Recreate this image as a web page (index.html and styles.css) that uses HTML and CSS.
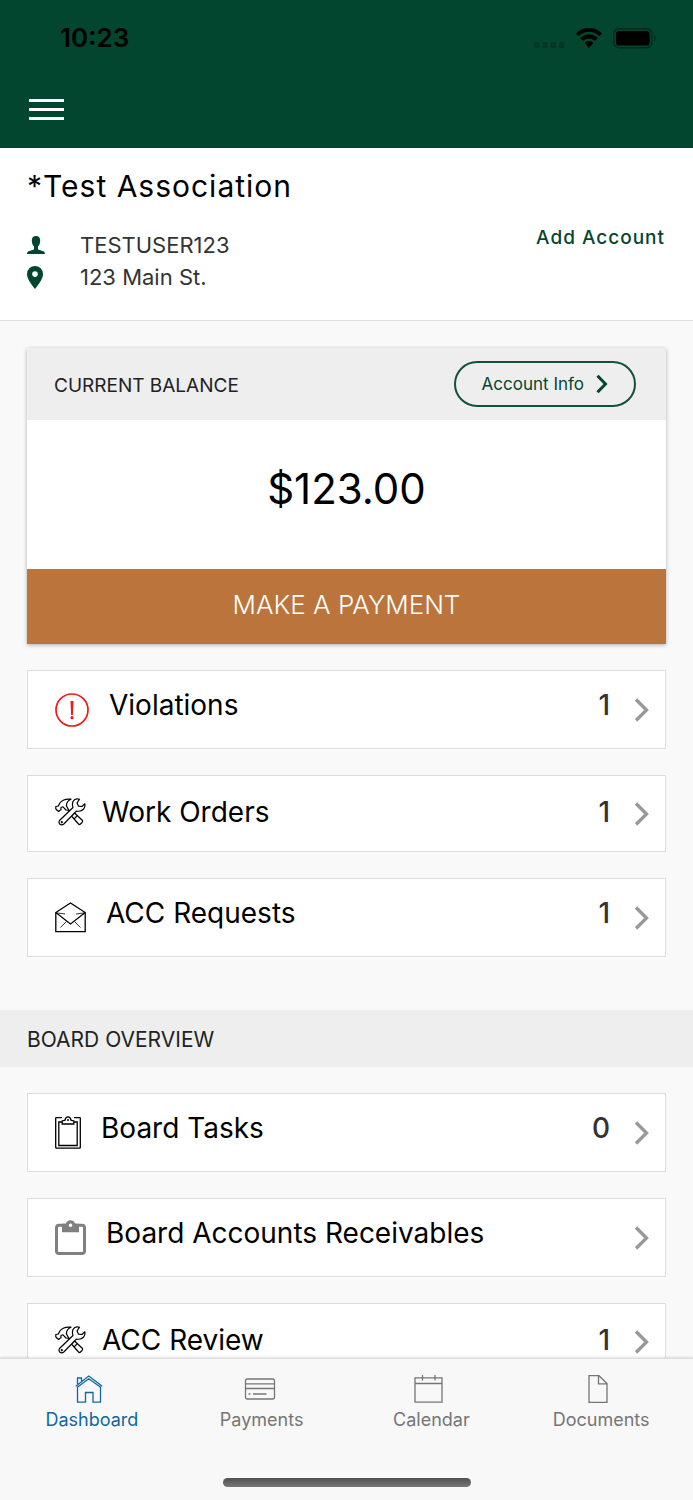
FILE: index.html
```
<!DOCTYPE html>
<html lang="en">
<head>
<meta charset="utf-8">
<meta name="viewport" content="width=device-width, initial-scale=1">
<title>Dashboard</title>
<link rel="stylesheet" href="styles.css">
</head>
<body>
<svg class="symbols" aria-hidden="true">
  <symbol id="chevron" viewBox="0 0 16 24"><path d="M2 1.5 12.500 12 2 22.500" fill="none" stroke="currentColor" stroke-width="3.400"/></symbol>
  <symbol id="tools" viewBox="0 0 31 28">
    <g fill="#fff" stroke="currentColor" stroke-width="1.200" stroke-linejoin="round">
      <path d="M16.500 18 19.500 15 27.500 22.500Q28 23.500 27 24.500L25.500 26Q24.500 27 23.500 26ZM19 21 22 17.800"/>
      <path d="M16 1.200Q8 .2 4.500 5.500L3.500 8 .8 8.500V11L3.500 13.500 6 11.500V9.500L8 8.800 11 12 14 12.500 11.500 8Q11 3.500 16 1.200Z"/>
      <path d="M24.500 1.200Q20-.2 18 3.500 16.800 6.500 18 9.500L4.500 22.500Q3.200 24.500 5 26.300 7 27.500 8.800 26L21.500 13Q26 14 28.700 11 30.500 8.500 29.800 5.800L27 8.500 23.500 8.200 22 5Z"/>
      <circle cx="6.800" cy="24.200" r=".5"/>
    </g>
  </symbol>
</svg>
<div class="app">
  <header class="topbar">
    <div class="status">
      <span class="time">10:23</span>
      <span class="status-icons">
        <svg class="dots" viewBox="0 0 31 6" aria-hidden="true"><g fill="#000" opacity=".22"><rect width="5.500" height="6" rx="1.500"/><rect x="8.300" width="5.500" height="6" rx="1.500"/><rect x="16.600" width="5.500" height="6" rx="1.500"/><rect x="25" width="5.500" height="6" rx="1.500"/></g></svg>
        <svg class="wifi" viewBox="0 0 26 20" aria-hidden="true"><path d="M13 0C18 0 22.500 1.900 25.700 5.200Q26 5.600 25.600 6L23.800 7.800Q23.400 8.100 23 7.800A14.500 14.500 0 0 0 3 7.800Q2.600 8.100 2.200 7.800L.4 6Q0 5.600.3 5.200C3.500 1.900 8 0 13 0ZM13 6.500C16.200 6.500 19.200 7.700 21.400 9.800Q21.800 10.200 21.400 10.600L19.300 12.600Q18.900 12.900 18.500 12.600A8.500 8.500 0 0 0 7.500 12.600Q7.100 12.900 6.700 12.600L4.600 10.600Q4.200 10.200 4.600 9.800C6.800 7.700 9.800 6.500 13 6.500ZM13 13.100C14.600 13.100 16 13.700 17 14.500Q17.400 14.900 17 15.300L13.500 19.500Q13 20 12.500 19.500L9 15.300Q8.600 14.900 9 14.500C10 13.700 11.400 13.100 13 13.100Z"/></svg>
        <svg class="battery" viewBox="0 0 44 21" aria-hidden="true"><rect x=".8" y=".8" width="38" height="19" rx="5" fill="none" stroke="#000" stroke-opacity=".42" stroke-width="1.400"/><rect x="3" y="3" width="33.600" height="14.600" rx="3.200"/><path d="M41 7.300Q43 8.200 43 10.300T41 13.300Z" opacity=".45"/></svg>
      </span>
    </div>
    <button class="menu" type="button" aria-label="Menu"><span></span><span></span><span></span></button>
  </header>

  <main class="content">
    <section class="account">
      <h1>*Test Association</h1>
      <div class="account-body">
        <ul class="details">
          <li><svg class="person" viewBox="0 0 18 18" aria-hidden="true"><path d="M9 0C12 0 13.200 1.800 13.200 4.500 13.200 7.500 12.300 9.200 11 10.400V13.500L16.500 15.300Q18 15.900 18 18H0Q0 15.900 1.500 15.300L7 13.500V10.400C5.700 9.200 4.800 7.500 4.800 4.500 4.800 1.800 6 0 9 0Z"/></svg><span>TESTUSER123</span></li>
          <li><svg class="pin" viewBox="0 0 16 23" aria-hidden="true"><path fill-rule="evenodd" d="M8 0A8 8 0 0 1 16 8C16 13 11.500 18.500 8 23 4.500 18.500 0 13 0 8A8 8 0 0 1 8 0ZM8 5.300A2.800 2.800 0 1 0 8 10.900 2.800 2.800 0 1 0 8 5.300Z"/></svg><span>123 Main St.</span></li>
        </ul>
        <a class="add" href="#add">Add Account</a>
      </div>
    </section>

    <section class="balance">
      <div class="balance-head">
        <h2>CURRENT BALANCE</h2>
        <button class="info" type="button"><span>Account Info</span><svg viewBox="0 0 12 20" aria-hidden="true"><path d="M1.500 1.800 9.500 10 1.500 18.200" fill="none" stroke="currentColor" stroke-width="3"/></svg></button>
      </div>
      <p class="amount">$123.00</p>
      <button class="pay" type="button">MAKE A PAYMENT</button>
    </section>

    <nav class="rows" aria-label="Account items">
      <a class="row" href="#violations">
        <svg class="icon alert" viewBox="0 0 34 34" aria-hidden="true"><circle cx="17" cy="17" r="16" fill="none" stroke="currentColor" stroke-width="1.700"/><path d="M15.500 8H18.500L17.900 22H16.100Z"/><circle cx="17" cy="24.700" r="1.600"/></svg>
        <span class="label">Violations</span><span class="count">1</span><svg class="chevron"><use href="#chevron"/></svg>
      </a>
      <a class="row row-tools" href="#orders">
        <svg class="icon tools" aria-hidden="true"><use href="#tools"/></svg>
        <span class="label">Work Orders</span><span class="count">1</span><svg class="chevron"><use href="#chevron"/></svg>
      </a>
      <a class="row" href="#acc">
        <svg class="icon mail" viewBox="0 0 31 31" aria-hidden="true"><g fill="none" stroke="currentColor"><path d="M.8 10.500V29.700H30.200V10.500L15.500 1Z" stroke-width="1.300"/><path d="M.8 10.500 15.500 22 30.200 10.500" stroke-width="1.200"/><path d="M11.500 19.500 5.500 25.500M19.500 19.500 25.500 25.500M1 10.800 10 12M30 10.800 21 12" stroke-width=".8"/></g></svg>
        <span class="label">ACC Requests</span><span class="count">1</span><svg class="chevron"><use href="#chevron"/></svg>
      </a>
    </nav>

    <h2 class="band">BOARD OVERVIEW</h2>

    <nav class="rows" aria-label="Board items">
      <a class="row" href="#tasks">
        <svg class="icon board" viewBox="0 0 26 33" aria-hidden="true"><g fill="none" stroke="currentColor" stroke-width="1.300"><path d="M7 1.700H1.200Q.7 1.700.7 2.200V31.500Q.7 32.200 1.400 32.200H24.600Q25.300 32.200 25.300 31.500V2.200Q25.300 1.700 24.800 1.700H19"/><path d="M7 6H3.800V29.500H22.200V6H19"/><path d="M7.200 8V5L10 4.200Q10.500 .8 13 .8T16 4.200L18.800 5V8Z"/></g><circle cx="13" cy="4" r="1"/></svg>
        <span class="label">Board Tasks</span><span class="count">0</span><svg class="chevron"><use href="#chevron"/></svg>
      </a>
      <a class="row" href="#receivables">
        <svg class="icon clip" viewBox="0 0 31 35" aria-hidden="true"><rect x="1.500" y="5.200" width="28" height="28.300" rx="2.500" fill="none" stroke="currentColor" stroke-width="3"/><path fill-rule="evenodd" d="M7 3.800H10.800A4.900 4.900 0 0 1 20.200 3.800H24V12.300H7ZM15.500 3.600A1.700 1.700 0 1 0 15.500 7 1.700 1.700 0 1 0 15.500 3.600Z"/><circle cx="15.500" cy="5.300" r="1.700" fill="#fff"/></svg>
        <span class="label">Board Accounts Receivables</span><svg class="chevron"><use href="#chevron"/></svg>
      </a>
      <a class="row row-tools" href="#review">
        <svg class="icon tools" aria-hidden="true"><use href="#tools"/></svg>
        <span class="label">ACC Review</span><span class="count">1</span><svg class="chevron"><use href="#chevron"/></svg>
      </a>
    </nav>
  </main>

  <footer class="bottom">
    <nav class="tabs" aria-label="Main">
      <a class="tab active" href="#dashboard"><svg viewBox="0 0 32 28" aria-hidden="true"><path d="M3.500 11.500V27.200H11.500V17.500H19V27.200H26.500V11.500M1.800 11.300 14.800 1 28.200 11.300M3 12.500 14.800 3.800 27 12.500M3.500 9V3H7.500V6"/></svg><span>Dashboard</span></a>
      <a class="tab" href="#payments"><svg viewBox="0 0 32 28" aria-hidden="true"><path d="M3.500 4H28.500Q30.500 4 30.500 6V22Q30.500 24 28.500 24H3.500Q1.500 24 1.500 22V6Q1.500 4 3.500 4ZM1.500 8.800H30.500M1.500 13.500H30.500M4.500 19H6.500M9 19H22.500"/></svg><span>Payments</span></a>
      <a class="tab" href="#calendar"><svg viewBox="0 0 32 28" aria-hidden="true"><path d="M2 2.800H29V27.200H2ZM2 8.500H29M9.500 0V5.500M22 0V5.500"/></svg><span>Calendar</span></a>
      <a class="tab" href="#documents"><svg viewBox="0 0 32 28" aria-hidden="true"><path d="M6 .7H16L24 8.500V27.300H6ZM15.500 .7V8.800H24"/></svg><span>Documents</span></a>
    </nav>
    <div class="home"></div>
  </footer>
</div>
</body>
</html>
```
FILE: styles.css
```
* { box-sizing: border-box; }
body { margin: 0; font-family: Inter, "Liberation Sans", sans-serif; font-weight: 400; color: #000; background: #f9f9f9; }
h1, h2, p, ul { margin: 0; padding: 0; font-weight: 400; }
ul { list-style: none; }
a { color: inherit; text-decoration: none; }
button { font: inherit; border: 0; padding: 0; background: none; cursor: pointer; }
svg { display: block; flex: none; fill: currentColor; }
.symbols { position: absolute; width: 0; height: 0; }

.app { display: flex; flex-direction: column; height: 100vh; }

.topbar { flex: none; background: #034630; padding: 24px 28px; }
.status { display: flex; justify-content: space-between; align-items: center; padding: 0 8px 0 32px; height: 28px; }
.time { font-size: 26px; line-height: 28px; font-weight: 600; }
.status-icons { display: flex; align-items: center; gap: 11px; }
.dots { width: 31px; height: 6px; margin-top: 13px; }
.wifi { width: 26px; height: 20px; }
.battery { width: 44px; height: 21px; }
.menu { display: grid; gap: 6px; width: 36px; margin: 47px 0 4px; padding: 0 0 0 1px; }
.menu span { height: 3px; background: #fff; }

.content { flex: 1; min-height: 0; overflow: auto; scrollbar-width: none; }

.account { padding: 20px 28px 27px 27px; background: #fff; border-bottom: 1px solid #dedede; }
.account h1 { font-size: 30px; line-height: 36px; letter-spacing: 1px; }
.account-body { display: flex; justify-content: space-between; align-items: flex-start; margin-top: 22px; }
.details { padding-top: 3px; }
.details li { display: flex; align-items: center; font-size: 22px; line-height: 32px; color: #333; }
.details svg { color: #034630; margin-right: 35px; }
.details .person { width: 18px; height: 18px; }
.details .pin { width: 16px; height: 23px; margin-right: 37px; }
.add { color: #034630; font-size: 19px; line-height: 24px; font-weight: 500; letter-spacing: 1px; }

.balance { margin: 27px 27px 0; background: #fff; box-shadow: 0 1px 4px rgba(0, 0, 0, .3); }
.balance-head { display: flex; justify-content: space-between; align-items: center; padding: 13px 30px 13px 27px; background: #eee; }
.balance-head h2 { font-size: 19px; line-height: 28px; color: #222; margin-top: 4px; }
.info { display: flex; align-items: center; gap: 12px; height: 46px; padding: 0 26px; border: 2px solid #12523d; border-radius: 23px; color: #034630; font-size: 17px; }
.info svg { width: 12px; height: 20px; }
.amount { padding: 41px 0 52px; text-align: center; font-size: 42px; line-height: 56px; }
.pay { display: block; width: 100%; background: #bb743b; color: #fff; font-size: 26px; line-height: 32px; padding: 20px 0 23px; font-weight: 300; }

.rows { display: grid; gap: 26px; padding: 26px 27px 0; }
.row { display: flex; align-items: center; height: 79px; padding: 0 15px 0 27px; background: #fff; border: 1px solid #ddd; }
.row-tools { height: 77px; }
.icon { margin-right: 20px; }
.label { flex: 1; font-size: 28px; line-height: 36px; padding-bottom: 10px; }
.row-tools .label, .row-tools .count { padding-bottom: 4px; }
.row-tools .icon { margin: 0 16px 4px 0; }
.count { font-size: 28px; line-height: 36px; font-weight: 500; color: #333; padding-bottom: 10px; }
.chevron { width: 16px; height: 24px; margin-left: 24px; color: #999; }
.alert { width: 34px; height: 34px; color: #f01818; }
.tools { width: 31px; height: 28px; }
.mail { width: 31px; height: 31px; }
.board { width: 26px; height: 33px; }
.clip { width: 31px; height: 35px; color: #808080; }

.band { margin-top: 53px; padding: 16px 27px 13px; font-size: 21px; line-height: 28px; background: #eee; color: #222; }

.bottom { flex: none; height: 142px; background: #f8f8f8; border-top: 1px solid #ddd; box-shadow: 0 -1px 2px rgba(0, 0, 0, .12); z-index: 1; }
.tabs { display: grid; grid-template-columns: repeat(4, 1fr); padding: 16px 7px 0; }
.tab { display: grid; justify-items: center; gap: 4px; font-size: 18px; line-height: 26px; color: #757575; }
.tab svg { width: 32px; height: 28px; margin-right: 4px; fill: none; stroke: currentColor; stroke-width: 1.3; }
.active { color: #0f68a0; }
.home { width: 248px; height: 9px; margin: 45px auto 0; border-radius: 5px; background: linear-gradient(#505050, #777); }
```
